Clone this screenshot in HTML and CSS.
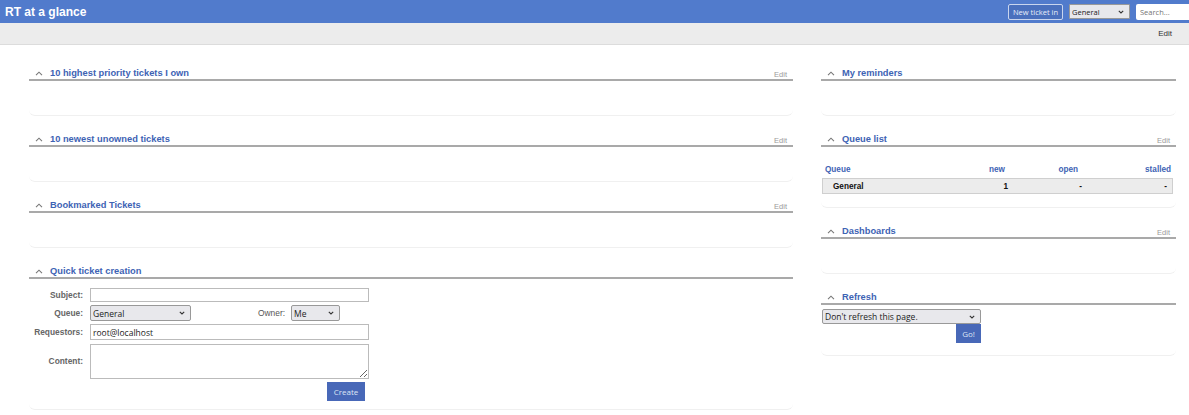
FILE: index.html
```html
<!DOCTYPE html>
<html lang="en">
<head>
    <meta charset="UTF-8">
    <title>RT at a glance</title>
    <link rel="stylesheet" href="styles.css">
</head>
<body>
    <div class="topbar">
        <h1>RT at a glance</h1>
        <div class="top-actions">
            <button class="new-ticket">New ticket in</button>
            <span class="sel top-queue">
                <select><option>General</option></select>
                <svg class="chev" viewBox="0 0 6 4"><polyline points="0.8,0.8 3,3 5.2,0.8"/></svg>
            </span>
            <input class="search" type="text" placeholder="Search...">
        </div>
    </div>
    <div class="subbar"><a href="#">Edit</a></div>

    <div class="main">
        <div class="col left">
            <div class="box">
                <div class="box-title">
                    <svg class="caret" viewBox="0 0 8 5"><polyline points="1,4.2 4,1.2 7,4.2"/></svg>
                    <span class="title">10 highest priority tickets I own</span>
                    <a class="edit" href="#">Edit</a>
                </div>
                <div class="box-body"></div>
            </div>
            <div class="box">
                <div class="box-title">
                    <svg class="caret" viewBox="0 0 8 5"><polyline points="1,4.2 4,1.2 7,4.2"/></svg>
                    <span class="title">10 newest unowned tickets</span>
                    <a class="edit" href="#">Edit</a>
                </div>
                <div class="box-body"></div>
            </div>
            <div class="box">
                <div class="box-title">
                    <svg class="caret" viewBox="0 0 8 5"><polyline points="1,4.2 4,1.2 7,4.2"/></svg>
                    <span class="title">Bookmarked Tickets</span>
                    <a class="edit" href="#">Edit</a>
                </div>
                <div class="box-body"></div>
            </div>
            <div class="box">
                <div class="box-title">
                    <svg class="caret" viewBox="0 0 8 5"><polyline points="1,4.2 4,1.2 7,4.2"/></svg>
                    <span class="title">Quick ticket creation</span>
                </div>
                <form class="box-body quick">
                    <label>Subject:</label>
                    <input class="wide subject" type="text">
                    <label>Queue:</label>
                    <div class="queue-row">
                        <span class="sel queue-sel">
                            <select><option>General</option></select>
                            <svg class="chev" viewBox="0 0 6 4"><polyline points="0.8,0.8 3,3 5.2,0.8"/></svg>
                        </span>
                        <label class="owner-label">Owner:</label>
                        <span class="sel owner-sel">
                            <select><option>Me</option></select>
                            <svg class="chev" viewBox="0 0 6 4"><polyline points="0.8,0.8 3,3 5.2,0.8"/></svg>
                        </span>
                    </div>
                    <label>Requestors:</label>
                    <input class="wide" type="text" value="root@localhost">
                    <label class="content-label">Content:</label>
                    <textarea class="wide"></textarea>
                    <div class="create-row"><button type="button" class="btn">Create</button></div>
                </form>
            </div>
        </div>

        <div class="col right">
            <div class="box">
                <div class="box-title">
                    <svg class="caret" viewBox="0 0 8 5"><polyline points="1,4.2 4,1.2 7,4.2"/></svg>
                    <span class="title">My reminders</span>
                </div>
                <div class="box-body"></div>
            </div>
            <div class="box">
                <div class="box-title">
                    <svg class="caret" viewBox="0 0 8 5"><polyline points="1,4.2 4,1.2 7,4.2"/></svg>
                    <span class="title">Queue list</span>
                    <a class="edit" href="#">Edit</a>
                </div>
                <div class="box-body queues">
                    <div class="qrow qhead">
                        <span>Queue</span><span>new</span><span>open</span><span>stalled</span>
                    </div>
                    <div class="qrow qdata">
                        <span>General</span><span>1</span><span>-</span><span>-</span>
                    </div>
                </div>
            </div>
            <div class="box">
                <div class="box-title">
                    <svg class="caret" viewBox="0 0 8 5"><polyline points="1,4.2 4,1.2 7,4.2"/></svg>
                    <span class="title">Dashboards</span>
                    <a class="edit" href="#">Edit</a>
                </div>
                <div class="box-body"></div>
            </div>
            <div class="box">
                <div class="box-title">
                    <svg class="caret" viewBox="0 0 8 5"><polyline points="1,4.2 4,1.2 7,4.2"/></svg>
                    <span class="title">Refresh</span>
                </div>
                <div class="box-body refresh">
                    <span class="sel refresh-sel">
                        <select><option>Don't refresh this page.</option></select>
                        <svg class="chev" viewBox="0 0 6 4"><polyline points="0.8,0.8 3,3 5.2,0.8"/></svg>
                    </span>
                    <button type="button" class="btn go">Go!</button>
                </div>
            </div>
        </div>
    </div>
</body>
</html>
```

FILE: styles.css
```css
body {
    margin: 0;
    font-family: "Liberation Sans", Arial, sans-serif;
    background: white;
    color: #333;
}
a {
    text-decoration: none;
}
.topbar {
    height: 23px;
    background-color: #517bcc;
    display: flex;
    align-items: center;
    justify-content: space-between;
}
.topbar h1 {
    margin: 0 0 0 5px;
    font-size: 12px;
    font-weight: bold;
    color: white;
}
.top-actions {
    display: flex;
    align-items: center;
    gap: 6px;
}
.new-ticket {
    height: 16px;
    padding: 0 4px;
    background: #4a70bd;
    border: 1px solid #c9d5ee;
    border-radius: 2px;
    color: #e8eefa;
    font-family: "Open Sans", sans-serif;
    font-size: 7.5px;
}
.search {
    width: 53px;
    height: 16px;
    box-sizing: border-box;
    border: none;
    border-radius: 2px 0 0 2px;
    padding: 0 4px;
    font-family: "Open Sans", sans-serif;
    font-size: 7.5px;
}
.subbar {
    height: 21px;
    background-color: #ececec;
    border-bottom: 1px solid #dcdcdc;
    display: flex;
    align-items: center;
    justify-content: flex-end;
    padding-right: 17px;
}
.subbar a {
    font-size: 8px;
    color: #333;
}
.main {
    display: flex;
    gap: 28px;
    padding: 19px 0 0 29px;
}
.col.left {
    width: 764px;
}
.col.right {
    width: 355px;
}
.box {
    border-bottom: 1px solid #f0f0f0;
    border-radius: 0 0 6px 6px;
    margin-bottom: 14px;
}
.box-title {
    height: 15px;
    border-bottom: 2px solid #a9a9a9;
    display: flex;
    align-items: flex-end;
}
.caret {
    width: 8px;
    height: 5px;
    margin: 0 7px 3px 6px;
    fill: none;
    stroke: #777;
    stroke-width: 1.1;
}
.title {
    font-size: 9.3px;
    font-weight: bold;
    color: #3e63b4;
    line-height: 11px;
}
.edit {
    margin-left: auto;
    margin-right: 6px;
    font-size: 7.5px;
    line-height: 9px;
    color: #9a9a9a;
}
.box-body {
    height: 34px;
}

/* custom selects */
.sel {
    position: relative;
    display: block;
    height: 16px;
}
.sel select {
    display: block;
    appearance: none;
    width: 100%;
    height: 100%;
    box-sizing: border-box;
    margin: 0;
    padding: 0 2px;
    background: #e8e8ec;
    border: 1px solid #999;
    border-radius: 2px;
    font-family: "Open Sans", sans-serif;
    font-size: 8.5px;
    color: #222;
}
.chev {
    position: absolute;
    right: 6px;
    top: 6px;
    width: 6px;
    height: 4px;
    fill: none;
    stroke: #333;
    stroke-width: 1.1;
    pointer-events: none;
}
.top-queue {
    width: 61px;
    height: 15px;
}
.top-queue select {
    font-size: 7.5px;
    border-radius: 1px;
}
.top-queue .chev {
    top: 5.5px;
}

.queues {
    height: auto;
    padding: 18px 3px 13px 0;
}
.qrow {
    display: grid;
    grid-template-columns: 129px 60px 80px 83px;
    font-size: 8.2px;
    font-weight: bold;
    text-align: right;
}
.qrow span:first-child {
    text-align: left;
}
.qhead {
    color: #3e63b4;
    height: 13px;
}
.qhead span:nth-child(1) { padding-left: 4px; }
.qhead span:nth-child(2) { padding-right: 5px; }
.qhead span:nth-child(3) { padding-right: 12px; }
.qhead span:nth-child(4) { padding-right: 2px; }
.qdata {
    background: #ececec;
    border: 1px solid #cfcfcf;
    height: 14px;
    line-height: 15px;
    color: #111;
    margin-left: 1px;
}
.qdata span:nth-child(1) { padding-left: 10px; }
.qdata span:nth-child(2) { padding-right: 4px; }
.qdata span:nth-child(3) { padding-right: 10px; }
.qdata span:nth-child(4) { padding-right: 8px; }

/* quick ticket form */
.quick {
    height: auto;
    display: grid;
    grid-template-columns: 54px 279px;
    column-gap: 7px;
    row-gap: 3px;
    align-items: center;
    padding: 9px 0 8px 0;
}
.quick label {
    font-size: 8.4px;
    font-weight: bold;
    color: #666;
    text-align: right;
    line-height: 10px;
}
.quick input,
.quick textarea {
    display: block;
    font-family: "Open Sans", sans-serif;
    font-size: 8.5px;
    color: #222;
    box-sizing: border-box;
    margin: 0;
    border: 1px solid #bbb;
}
.quick input {
    height: 16px;
    padding: 0 2px;
}
.quick input.subject {
    height: 14px;
}
.queue-row {
    display: flex;
    align-items: center;
    height: 16px;
}
.queue-sel {
    width: 101px;
}
.quick .owner-label {
    margin-left: 67px;
    margin-right: 6px;
    font-weight: normal;
    font-size: 8.4px;
    color: #555;
}
.owner-sel {
    width: 49px;
}
.quick textarea {
    height: 35px;
    margin-top: 1px;
    resize: vertical;
}
.create-row {
    grid-column: 2;
    display: flex;
    justify-content: flex-end;
    padding-right: 4px;
}
.btn {
    display: block;
    background: #4868b8;
    color: #dde5f5;
    border: none;
    font-family: "Open Sans", sans-serif;
    font-size: 8px;
    height: 19px;
    width: 38px;
    padding: 0;
}
.refresh {
    height: 50px;
    padding-top: 4px;
    box-sizing: border-box;
    display: flex;
    flex-direction: column;
    align-items: flex-start;
}
.refresh-sel {
    width: 159px;
    height: 15px;
    margin-left: 1px;
}
.refresh-sel .chev {
    top: 5.5px;
}
.go {
    width: 25px;
    height: 19px;
    margin-left: 135px;
}
```
